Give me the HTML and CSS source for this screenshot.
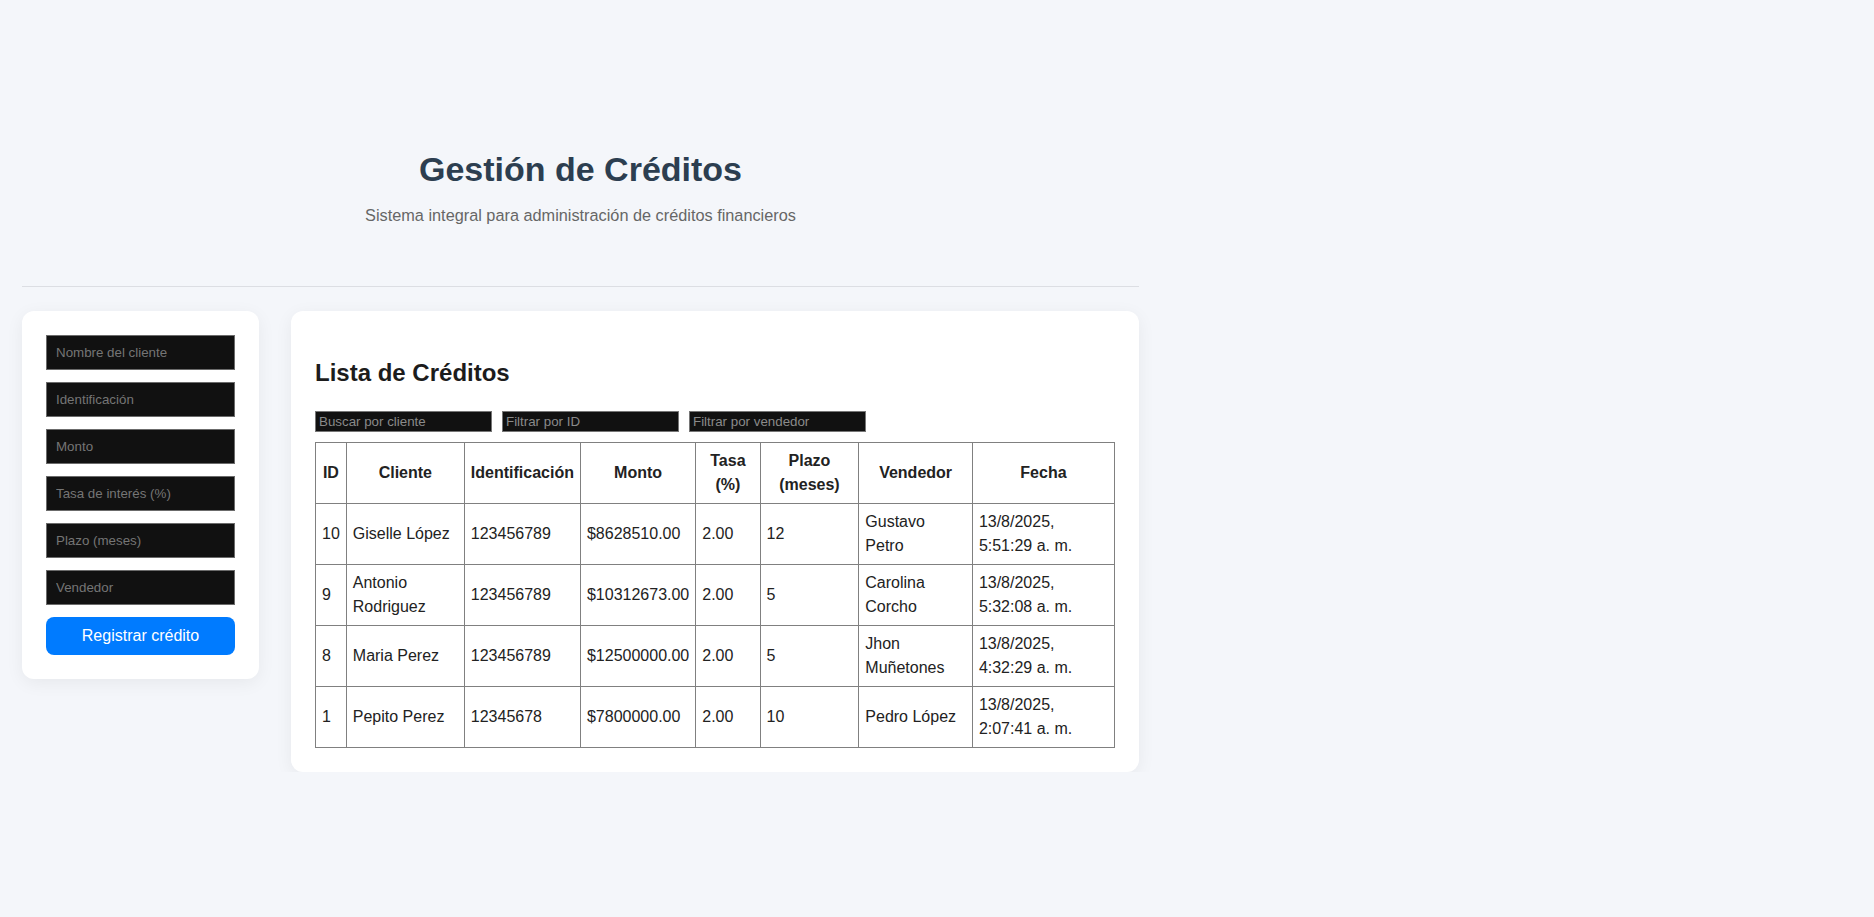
FILE: index.html
```html
<!DOCTYPE html>
<html lang="es">
<head>
<meta charset="utf-8">
<title>Gestión de Créditos</title>
<link rel="stylesheet" href="styles.css">
</head>
<body>
<div class="app">
  <header class="header">
    <h1 class="title">Gestión de Créditos</h1>
    <p class="subtitle">Sistema integral para administración de créditos financieros</p>
  </header>
  <main class="main">
    <form class="card form-card">
      <input class="field" type="text" placeholder="Nombre del cliente">
      <input class="field" type="text" placeholder="Identificación">
      <input class="field" type="text" placeholder="Monto">
      <input class="field" type="text" placeholder="Tasa de interés (%)">
      <input class="field" type="text" placeholder="Plazo (meses)">
      <input class="field" type="text" placeholder="Vendedor">
      <button class="btn" type="button">Registrar crédito</button>
    </form>
    <section class="card list-card">
      <h2 class="list-title">Lista de Créditos</h2>
      <div class="filters">
        <input class="filter" type="text" placeholder="Buscar por cliente">
        <input class="filter" type="text" placeholder="Filtrar por ID">
        <input class="filter" type="text" placeholder="Filtrar por vendedor">
      </div>
      <table class="table">
        <thead>
          <tr>
            <th>ID</th><th>Cliente</th><th>Identificación</th><th>Monto</th><th>Tasa (%)</th><th>Plazo (meses)</th><th>Vendedor</th><th>Fecha</th>
          </tr>
        </thead>
        <tbody>
          <tr><td>10</td><td>Giselle López</td><td>123456789</td><td>$8628510.00</td><td>2.00</td><td>12</td><td>Gustavo Petro</td><td>13/8/2025, 5:51:29 a. m.</td></tr>
          <tr><td>9</td><td>Antonio Rodriguez</td><td>123456789</td><td>$10312673.00</td><td>2.00</td><td>5</td><td>Carolina Corcho</td><td>13/8/2025, 5:32:08 a. m.</td></tr>
          <tr><td>8</td><td>Maria Perez</td><td>123456789</td><td>$12500000.00</td><td>2.00</td><td>5</td><td>Jhon Muñetones</td><td>13/8/2025, 4:32:29 a. m.</td></tr>
          <tr><td>1</td><td>Pepito Perez</td><td>12345678</td><td>$7800000.00</td><td>2.00</td><td>10</td><td>Pedro López</td><td>13/8/2025, 2:07:41 a. m.</td></tr>
        </tbody>
      </table>
    </section>
  </main>
</div>
</body>
</html>
```

FILE: styles.css
```css
* { box-sizing: border-box; }

body {
  margin: 0;
  background: #f4f6fa;
  font-family: "Liberation Sans", Arial, sans-serif;
  font-size: 16px;
  line-height: 1.5;
  color: #222;
}

.app {
  width: 1117px;
  margin-left: 22px;
}

.header {
  padding: 145px 0 59px;
  border-bottom: 1px solid #dcdee3;
  text-align: center;
}

.title {
  margin: 0 0 10px;
  font-size: 34px;
  line-height: 48px;
  font-weight: bold;
  color: #2c3e50;
}

.subtitle {
  margin: 0;
  font-size: 16.3px;
  line-height: 24px;
  color: #666;
}

.main {
  display: flex;
  align-items: flex-start;
  gap: 32px;
  margin-top: 24px;
}

.card {
  background: #fff;
  border-radius: 12px;
  padding: 24px;
  box-shadow: 0 4px 18px rgba(0, 0, 0, 0.06);
}

.form-card {
  width: 237px;
  display: flex;
  flex-direction: column;
  gap: 12px;
}

.field {
  display: block;
  width: 189px;
  height: 35px;
  margin: 0;
  padding: 0 9px;
  background: #111;
  border: 1px solid #6b6b6b;
  border-radius: 0;
  font-family: "Liberation Sans", Arial, sans-serif;
  font-size: 13.33px;
  color: #ddd;
}

.field::placeholder { color: #757575; }

.btn {
  height: 38px;
  width: 189px;
  border: none;
  border-radius: 8px;
  background: #007bff;
  color: #fff;
  font-family: "Liberation Sans", Arial, sans-serif;
  font-size: 16px;
  cursor: pointer;
}

.list-card {
  width: 848px;
}

.list-title {
  margin: 19.92px 0;
  font-size: 24px;
  line-height: 36px;
  font-weight: bold;
  color: #1c1c1c;
}

.filters {
  display: flex;
  gap: 10px;
  margin-bottom: 10px;
}

.filter {
  width: 177px;
  height: 21px;
  margin: 0;
  padding: 0 3px;
  background: #111;
  border: 1px solid #767676;
  border-radius: 0;
  font-family: "Liberation Sans", Arial, sans-serif;
  font-size: 13.33px;
  color: #ddd;
}

.filter::placeholder { color: #8a8a8a; }

.table {
  width: 100%;
  border-collapse: collapse;
  border: 1px solid #808080;
  font-size: 16px;
  line-height: 24px;
  color: #222;
}

.table th,
.table td {
  border: 1px solid #808080;
  padding: 6px;
  vertical-align: middle;
}

.table th {
  font-weight: bold;
  text-align: center;
}

.table td {
  text-align: left;
}
```
